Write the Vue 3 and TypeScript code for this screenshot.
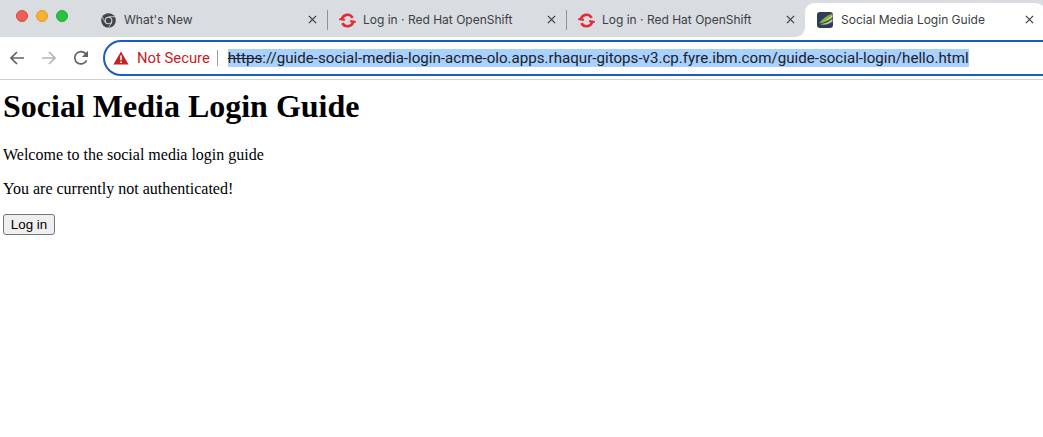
<script setup lang="ts">
interface Tab { title: string; kind: 'chrome' | 'redhat' | 'guide'; active?: boolean }
const tabs: Tab[] = [
  { title: "What's New", kind: 'chrome' },
  { title: 'Log in · Red Hat OpenShift', kind: 'redhat' },
  { title: 'Log in · Red Hat OpenShift', kind: 'redhat' },
  { title: 'Social Media Login Guide', kind: 'guide', active: true },
]
</script>

<template>
  <div class="window">
    <header class="strip">
      <div class="lights">
        <span class="light red"></span>
        <span class="light yellow"></span>
        <span class="light green"></span>
      </div>
      <div class="tabs">
        <div v-for="(t, i) in tabs" :key="i" class="tab" :class="{ active: t.active, sep: i < 2, first: i === 0 }">
          <svg v-if="t.kind === 'chrome'" class="fav chrome" viewBox="0 0 16 16">
            <circle cx="8" cy="8" r="7.8" fill="#43464a" />
            <circle cx="8" cy="8" r="4.1" fill="#d9dce1" />
            <circle cx="8" cy="8" r="3" fill="#43464a" />
            <path d="M8 3.9H15M4.5 10L1.2 4.2M11.5 10L8 15.8" stroke="#d9dce1" stroke-width="0.8" fill="none" />
          </svg>
          <svg v-else-if="t.kind === 'redhat'" class="fav hat" viewBox="0 0 16 16">
            <path d="M2.65 7.2A5.4 5.4 0 0 1 12.79 5.5M13.35 8.8A5.4 5.4 0 0 1 3.21 10.5" fill="none" stroke="#e02d36" stroke-width="2.5" />
            <path d="M0.2 6.6L5.5 7.4M10.5 8.6L15.8 9.4" stroke="#e02d36" stroke-width="2" fill="none" />
          </svg>
          <svg v-else class="fav" viewBox="0 0 16 16">
            <rect width="16" height="16" rx="3" fill="#323b55" />
            <path d="M2 11.5C5 7 10 3.5 15.5 1.5V5.5C12.5 8.5 7.5 10.8 2 11.5Z" fill="#7fb23a" />
            <path d="M5 9.6C9 8.4 12.5 6.2 15.5 3.2V4.6C12.5 7.2 9 9 5 9.6Z" fill="#e3f0c2" />
            <path d="M3 12.2C8 11.8 12 9.8 15.5 6.5V9.5C12.5 12 8 13.4 3 12.2Z" fill="#b9c4a6" />
          </svg>
          <span class="title">{{ t.title }}</span>
          <svg class="close" viewBox="0 0 10 10">
            <path d="M1 1L9 9M9 1L1 9" stroke="#3c4043" stroke-width="1.4" fill="none" />
          </svg>
        </div>
      </div>
    </header>

    <nav class="toolbar">
      <div class="navs">
        <svg class="nav" viewBox="0 0 16 16"><path d="M15 8H2M8 2L2 8L8 14" fill="none" stroke="#5f6368" stroke-width="1.7" /></svg>
        <svg class="nav" viewBox="0 0 16 16"><path d="M1 8H14M8 2L14 8L8 14" fill="none" stroke="#b1b3b6" stroke-width="1.7" /></svg>
        <svg class="nav" viewBox="0 0 16 16"><path d="M13.6 10.4A6.2 6.2 0 1 1 12.6 3.6L14.4 5.4" fill="none" stroke="#5f6368" stroke-width="1.7" /><path d="M15 0.8V7H8.8Z" fill="#5f6368" /></svg>
      </div>
      <div class="omnibox">
        <svg class="warn" viewBox="0 0 16 14"><path d="M8 0.4L15.6 13.6H0.4Z" fill="#c5221f" /><path d="M8 4.6V9.2M8 10.4V12" stroke="#fff" stroke-width="1.6" fill="none" /></svg>
        <span class="insecure">Not Secure</span>
        <span class="divider"></span>
        <span class="url"><s class="scheme">https</s>://guide-social-media-login-acme-olo.apps.rhaqur-gitops-v3.cp.fyre.ibm.com/guide-social-login/hello.html</span>
      </div>
    </nav>

    <main class="page">
      <h1>Social Media Login Guide</h1>
      <p>Welcome to the social media login guide</p>
      <p>You are currently not authenticated!</p>
      <button type="button">Log in</button>
    </main>
  </div>
</template>

<style scoped>
.window { width: 1043px; height: 437px; overflow: hidden; background: #fff; display: flex; flex-direction: column; font-family: "Liberation Sans", Arial, sans-serif; }
.strip { height: 37px; flex: none; background: #d9dce1; display: flex; }
.lights { width: 88px; flex: none; display: flex; gap: 8px; padding: 10px 0 0 16px; box-sizing: border-box; }
.light { width: 12px; height: 12px; border-radius: 50%; box-sizing: border-box; }
.red { background: #ed5f57; border: 1px solid #d8493f; }
.yellow { background: #f6b12f; border: 1px solid #dd9c27; }
.green { background: #27c33f; border: 1px solid #23ab37; }
.tabs { display: flex; flex: none; padding-top: 3px; }
.tab { width: 239px; height: 34px; box-sizing: border-box; display: flex; align-items: center; padding: 0 8px 2px 12px; position: relative; flex: none; }
.tab.first { padding-left: 13px; }
.tab.sep::after { content: ""; position: absolute; right: -1px; top: 7px; height: 20px; width: 1px; background: #8f9296; }
.tab.active { background: #fff; border-radius: 9px 9px 0 0; width: 240px; }
.tab.active::before { content: ""; position: absolute; left: -9px; bottom: 0; width: 9px; height: 9px; background: radial-gradient(circle at 0 0, #d9dce1 8.5px, #fff 9px); }
.fav { width: 16px; height: 16px; flex: none; margin-right: 8px; margin-top: 1px; }
.chrome { width: 15px; height: 15px; margin-top: 2px; }
.hat { width: 17px; height: 17px; margin-right: 7px; margin-top: 3px; }
.title { flex: 1; font-size: 12px; color: #3c4043; white-space: nowrap; overflow: hidden; font-family: Inter, "Liberation Sans", sans-serif; }
.close { width: 9px; height: 9px; flex: none; margin-right: 2px; }
.tab.active .close { margin-right: 3px; }
.toolbar { height: 43px; flex: none; box-sizing: border-box; border-bottom: 1px solid #d0d1d3; display: flex; align-items: center; padding-left: 9px; background: #fff; }
.navs { display: flex; gap: 16px; width: 94px; flex: none; align-items: center; }
.nav { width: 16px; height: 16px; flex: none; }
.omnibox { height: 36px; width: 980px; flex: none; box-sizing: border-box; border: 2px solid #1a5cc4; border-radius: 18px; display: flex; align-items: center; padding-left: 8px; white-space: nowrap; }
.warn { width: 16px; height: 14px; flex: none; margin-right: 8px; }
.insecure { color: #c5221f; font-size: 14.8px; font-family: Roboto, "Liberation Sans", sans-serif; }
.divider { width: 1px; height: 16px; background: #9a9c9f; margin: 0 10px 0 7px; flex: none; }
.url { font-size: 15.13px; line-height: 18px; background: #a8d1ff; color: #202124; font-family: Roboto, "Liberation Sans", sans-serif; }
.scheme { text-decoration-thickness: 1px; }
.page { padding: 0 3px; font-family: "Liberation Serif", "Times New Roman", serif; font-size: 16px; color: #000; }
h1 { font-size: 32px; font-weight: 700; line-height: 37px; margin: 8px 0 21px; }
p { margin: 16px 0; line-height: 18px; }
button { display: block; width: 52px; height: 21px; padding: 0; box-sizing: border-box; border: 1px solid #767676; border-radius: 3px; background: #efefef; color: #000; font: 13.33px "Liberation Sans", Arial, sans-serif; }
</style>
